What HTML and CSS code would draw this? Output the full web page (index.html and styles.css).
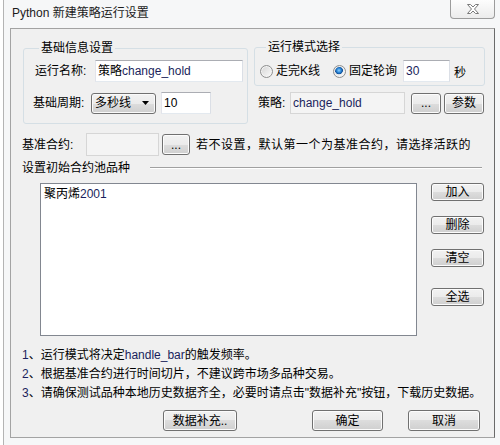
FILE: index.html
```html
<!DOCTYPE html>
<html lang="zh-CN">
<head>
<meta charset="utf-8">
<title>Python 新建策略运行设置</title>
<link rel="stylesheet" href="styles.css">
</head>
<body>
<div class="window">
  <div class="titlebar">
    <span class="title">Python 新建策略运行设置</span>
    <div class="close">
      <svg width="14" height="12" viewBox="0 0 14 12"><polygon points="1.5,1.5 4.5,1.5 7,4 9.5,1.5 12.5,1.5 8.5,6 12.5,10.5 9.5,10.5 7,8 4.5,10.5 1.5,10.5 5.5,6" fill="#ffffff" stroke="#7a7a7a" stroke-width="1" stroke-linejoin="round"/></svg>
    </div>
  </div>
  <div class="client">
    <div class="top">
      <fieldset class="group g1">
        <legend>基础信息设置</legend>
        <div class="row r1"><span class="lbl l1">运行名称:</span><div class="edit name">策略<span class="lat">change_hold</span></div></div>
        <div class="row r2"><span class="lbl l2">基础周期:</span><div class="combo">多秒线<svg class="arrow" width="7" height="4" viewBox="0 0 7 4"><polygon points="0,0 7,0 3.5,4" fill="#000"/></svg></div><div class="edit period">10</div></div>
      </fieldset>
      <div class="rightcol">
        <fieldset class="group g2">
          <legend>运行模式选择</legend>
          <div class="row r3">
            <span class="radio"></span><span class="rtext">走完K线</span>
            <span class="radio on r2b"></span><span class="rtext">固定轮询</span>
            <div class="edit secs lat">30</div><span class="sec">秒</span>
          </div>
        </fieldset>
        <div class="row r4">
          <span class="lbl l4">策略:</span>
          <div class="edit ro strat lat">change_hold</div>
          <button class="btn dots">...</button>
          <button class="btn params">参数</button>
        </div>
      </div>
    </div>

    <div class="row base">
      <span class="lbl l5">基准合约:</span>
      <div class="edit ro basein"></div>
      <button class="btn dots2">...</button>
      <span class="hint">若不设置，默认第一个为基准合约，请选择活跃的</span>
    </div>

    <div class="sectitle">
      <span>设置初始合约池品种</span>
      <span class="sepline"></span>
    </div>

    <div class="listrow">
      <div class="listbox"><div class="item">聚丙烯<span class="lat">2001</span></div></div>
      <div class="sidebtns">
        <button class="btn side add">加入</button>
        <button class="btn side del">删除</button>
        <button class="btn side clr">清空</button>
        <button class="btn side all">全选</button>
      </div>
    </div>

    <div class="notes">
      <p><span class="lat">1</span>、运行模式将决定<span class="lat">handle_bar</span>的触发频率。</p>
      <p><span class="lat">2</span>、根据基准合约进行时间切片，不建议跨市场多品种交易。</p>
      <p><span class="lat">3</span>、请确保测试品种本地历史数据齐全，必要时请点击"数据补充"按钮，下载历史数据。</p>
    </div>

    <div class="bottombtns">
      <button class="btn b1">数据补充..</button>
      <button class="btn b2">确定</button>
      <button class="btn b3">取消</button>
    </div>
  </div>
</div>
</body>
</html>
```

FILE: styles.css
```css
html, body {
  margin: 0;
  padding: 0;
}
body {
  width: 500px;
  height: 445px;
  overflow: hidden;
  background: #ffffff;
  font-family: "Liberation Sans", "Noto Sans CJK SC", sans-serif;
  font-size: 12px;
  color: #000;
}
.window {
  margin-left: 3px;
  height: 445px;
  box-sizing: border-box;
  border-left: 1px solid #b4b4b4;
  background: #f6f7f8;
  padding: 0 5px 0 6px;
}
.titlebar {
  height: 28px;
  display: flex;
  align-items: flex-start;
}
.title {
  margin-left: 2px;
  margin-top: 6px;
  line-height: 14px;
  color: #1b1b1b;
}
.close {
  margin-left: auto;
  width: 45px;
  height: 19px;
  box-sizing: border-box;
  border: 1px solid #9c9c9c;
  border-top: none;
  border-radius: 0 0 4px 4px;
  background: linear-gradient(#fdfdfd, #ececec);
  display: flex;
  align-items: center;
  justify-content: center;
}
.client {
  height: 410px;
  box-sizing: border-box;
  border: 1px solid #a3a3a3;
  border-right-color: #6a6a6a;
  background: #f0f0f0;
  padding-top: 12px;
  display: flex;
  flex-direction: column;
}
.lat { color: #1a1f5c; }

.top {
  display: flex;
  padding-left: 12px;
  gap: 6px;
}
fieldset.group {
  margin: 0;
  min-width: 0;
  border: 1px solid #d5dfe5;
  border-radius: 3px;
  box-sizing: border-box;
  padding: 0;
}
fieldset.group legend {
  padding: 0 2px;
  line-height: 14px;
  font-size: 12px;
}
.g1 {
  width: 225px;
  padding: 5px 0 9px 11px !important;
}
.g1 legend { margin-left: 4px; }
.rightcol {
  margin-top: -1px;
  display: flex;
  flex-direction: column;
}
.g2 {
  width: 231px;
  padding: 6px 0 3px 5px !important;
}
.g2 legend { margin-left: 6px; }

.row {
  display: flex;
  align-items: center;
}
.lbl { line-height: 14px; white-space: nowrap; }
.l1 { width: 60px; }
.r2 { margin-top: 10px; }
.l2 { width: 58px; margin-left: -2px; }

.edit {
  box-sizing: border-box;
  height: 22px;
  border: 1px solid;
  border-color: #abadb3 #dbdfe6 #e3e9ef #e2e3ea;
  background: #fff;
  padding: 0 2px;
  line-height: 20px;
  white-space: nowrap;
}
.edit.ro {
  background: #f4f4f4;
  border-color: #d6d6d6;
}
.name { width: 148px; }
.combo {
  box-sizing: border-box;
  width: 65px;
  height: 21px;
  border: 1px solid #707070;
  border-radius: 3px;
  background: linear-gradient(#f2f2f2 0%, #ebebeb 50%, #dddddd 50%, #cfcfcf 100%);
  box-shadow: inset 0 0 0 1px #fafafa;
  display: flex;
  align-items: center;
  padding-left: 3px;
  line-height: 14px;
}
.arrow { margin-left: auto; margin-right: 6px; }
.period { width: 50px; margin-left: 5px; }

.radio {
  width: 13px;
  height: 13px;
  box-sizing: border-box;
  border-radius: 50%;
  border: 1px solid #8e8f8f;
  background: linear-gradient(135deg, #d4d4d4, #fbfbfb);
  box-shadow: inset 0 0 0 1px #f4f4f4;
  flex: none;
}
.radio.on {
  background:
    radial-gradient(circle at 45% 40%, #8fd0ff 0, #2a86d6 2.2px, #0f4f99 3.6px, rgba(255,255,255,0) 4.2px),
    linear-gradient(135deg, #d4d4d4, #fbfbfb);
}
.rtext { margin-left: 3px; line-height: 14px; }
.r2b { margin-left: 13px; }
.secs { width: 47px; margin-left: 6px; }
.sec { margin-left: 4px; }

.r4 { margin-top: 6px; }
.l4 { width: 32px; margin-left: 4px; }
.strat { width: 115px; }

.btn {
  box-sizing: border-box;
  border: 1px solid #707070;
  border-radius: 3px;
  background: linear-gradient(#f2f2f2 0%, #ebebeb 50%, #dddddd 50%, #cfcfcf 100%);
  box-shadow: inset 0 0 0 1px #fcfcfc;
  font: inherit;
  color: #000;
  padding: 0;
  margin: 0;
  text-align: center;
  line-height: 14px;
}
.dots { width: 30px; height: 21px; margin-left: 6px; }
.params { width: 40px; height: 21px; margin-left: 3px; }

.base {
  margin-top: 9px;
  padding-left: 11px;
}
.l5 { width: 64px; }
.basein { width: 73px; height: 23px; }
.dots2 { width: 28px; height: 21px; margin-left: 3px; }
.hint { margin-left: 6px; letter-spacing: 0.5px; line-height: 14px; }

.sectitle {
  margin-top: 5px;
  padding-left: 11px;
  display: flex;
  align-items: center;
  line-height: 14px;
}
.sepline {
  flex: 1;
  margin-left: 20px;
  margin-right: 12px;
  height: 0;
  border-top: 1px solid #a0a0a0;
  border-bottom: 1px solid #ffffff;
}

.listrow {
  margin-top: 8px;
  display: flex;
  padding-left: 29px;
}
.listbox {
  width: 377px;
  height: 153px;
  box-sizing: border-box;
  border: 1px solid #828790;
  background: #fff;
  padding: 3px 3px;
}
.item { line-height: 14px; }
.sidebtns {
  margin-left: 14px;
  display: flex;
  flex-direction: column;
}
.side { width: 53px; height: 18px; }
.del { margin-top: 15px; }
.clr { margin-top: 15px; }
.all { margin-top: 21px; }

.notes {
  margin-top: 10px;
  padding-left: 11px;
}
.notes p {
  margin: 0;
  line-height: 19px;
  white-space: nowrap;
}

.bottombtns {
  margin-top: 7px;
  display: flex;
  padding-left: 152px;
}
.bottombtns .btn { height: 21px; }
.b1 { width: 74px; }
.b2 { width: 71px; margin-left: 75px; }
.b3 { width: 72px; margin-left: 25px; }
```
